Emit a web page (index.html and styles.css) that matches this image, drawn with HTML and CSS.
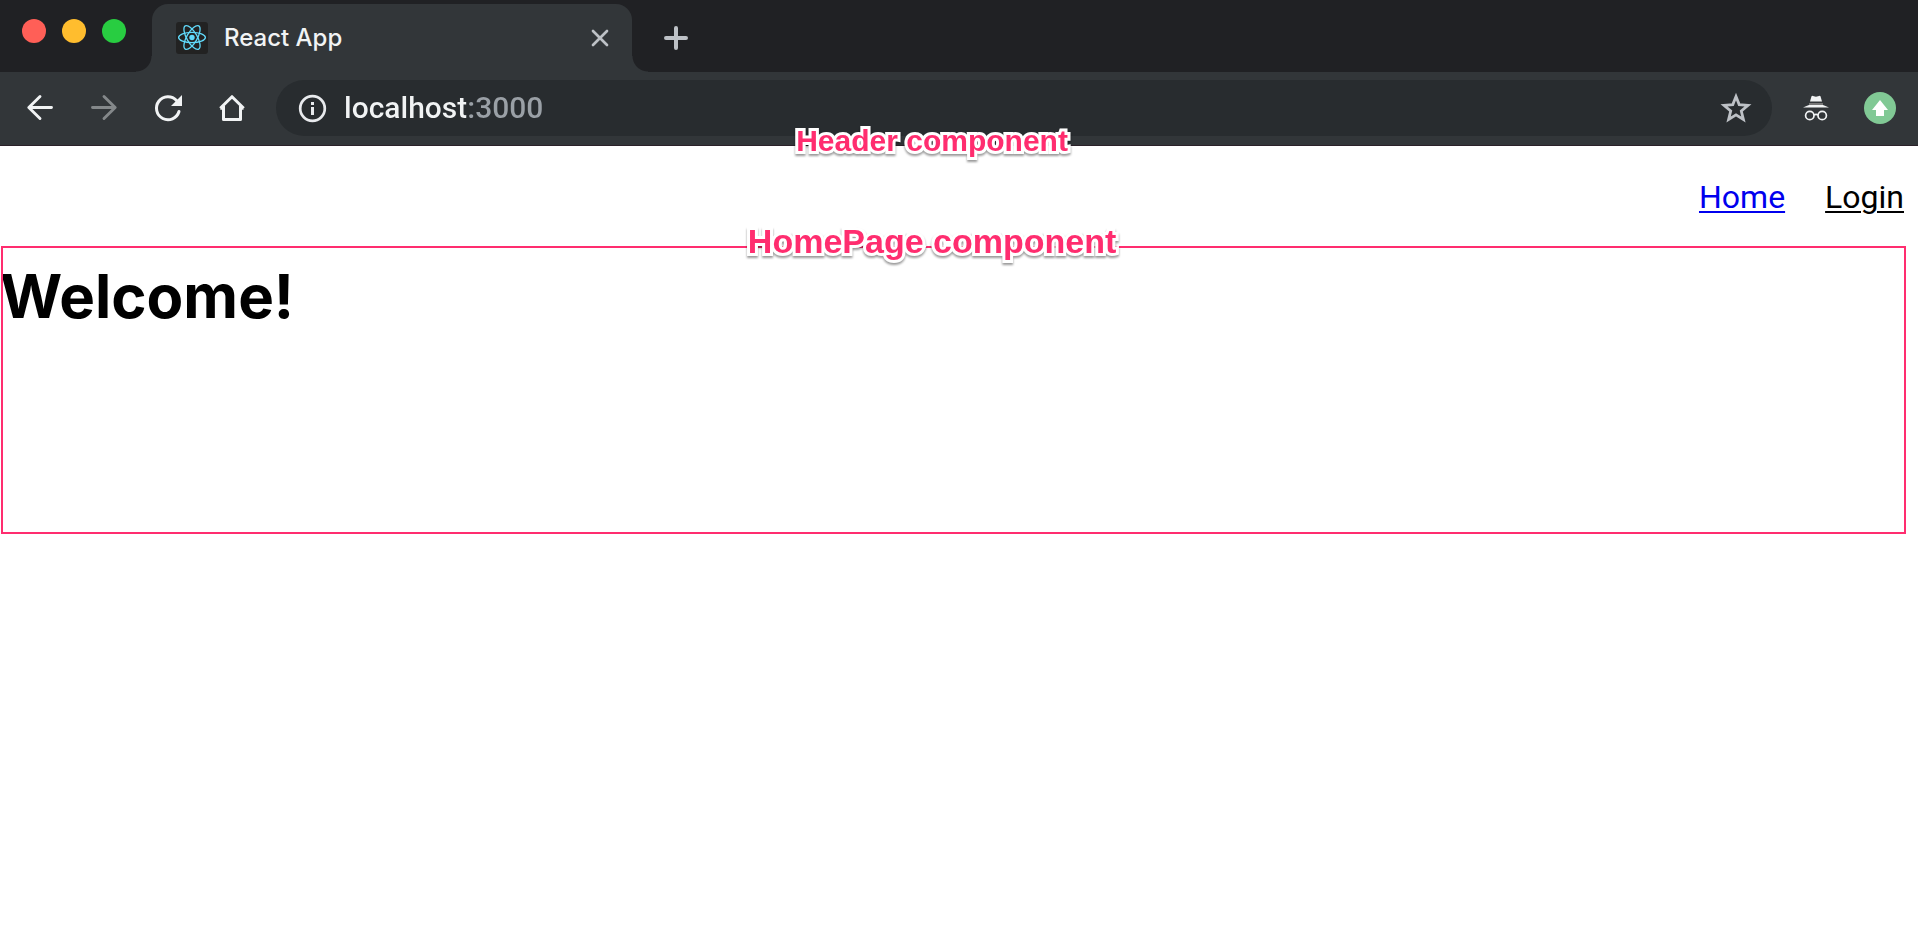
FILE: index.html
```html
<!DOCTYPE html>
<html lang="en">
<head>
<meta charset="utf-8">
<title>React App</title>
<link rel="stylesheet" href="styles.css">
</head>
<body>
<div class="browser">
  <div class="tab-strip">
    <div class="lights">
      <button class="light light-close" aria-label="Close window"></button>
      <button class="light light-min" aria-label="Minimize window"></button>
      <button class="light light-max" aria-label="Zoom window"></button>
    </div>
    <div class="tab">
      <svg class="favicon" viewBox="0 0 32 32" aria-hidden="true">
        <rect width="32" height="32" rx="3" fill="#222"/>
        <g fill="none" stroke="#61dafb" stroke-width="1.3">
          <ellipse cx="16" cy="15.5" rx="13.4" ry="5.2"/>
          <ellipse cx="16" cy="15.5" rx="13.4" ry="5.2" transform="rotate(60 16 15.5)"/>
          <ellipse cx="16" cy="15.5" rx="13.4" ry="5.2" transform="rotate(120 16 15.5)"/>
        </g>
        <circle cx="16" cy="15.5" r="2.7" fill="#61dafb"/>
      </svg>
      <span class="tab-title">React App</span>
      <button class="icon-button tab-close" aria-label="Close tab">
        <svg viewBox="0 0 24 24" width="24" height="24"><path d="M5 5l14 14M19 5L5 19" fill="none" stroke="#bdc1c6" stroke-width="2.7" stroke-linecap="round"/></svg>
      </button>
    </div>
    <button class="icon-button new-tab" aria-label="New tab">
      <svg viewBox="0 0 32 32" width="32" height="32"><path d="M16 6v20M6 16h20" fill="none" stroke="#bdc1c6" stroke-width="4" stroke-linecap="round"/></svg>
    </button>
  </div>
  <div class="toolbar">
    <div class="nav-buttons">
      <button class="icon-button" aria-label="Back">
        <svg viewBox="0 0 32 32" width="32" height="32"><path d="M27.5 15.5H5M16 4.500L4.800 15.500L16 26.500" fill="none" stroke="#f1f3f4" stroke-width="2.9" stroke-linecap="round" stroke-linejoin="round"/></svg>
      </button>
      <button class="icon-button" aria-label="Forward">
        <svg viewBox="0 0 32 32" width="32" height="32"><path d="M4.500 15.500H27M16 4.500L27.200 15.500L16 26.500" fill="none" stroke="#84888a" stroke-width="2.9" stroke-linecap="round" stroke-linejoin="round"/></svg>
      </button>
      <button class="icon-button" aria-label="Reload">
        <svg viewBox="0 0 32 32" width="32" height="32"><path d="M27 19.500A11.500 11.500 0 1 1 24.500 8.500" fill="none" stroke="#f1f3f4" stroke-width="3" stroke-linecap="round"/><path d="M30 3v11H19z" fill="#f1f3f4"/></svg>
      </button>
      <button class="icon-button" aria-label="Home">
        <svg viewBox="0 0 32 32" width="32" height="32"><path d="M7.500 14V27.500h17V14M4.300 16.300L16 4.700L27.700 16.300M4.300 16.300h3M24.500 16.300h3" fill="none" stroke="#f1f3f4" stroke-width="3" stroke-linejoin="round"/></svg>
      </button>
    </div>
    <div class="address-bar">
      <svg class="info" viewBox="0 0 32 32" width="32" height="32" aria-hidden="true"><circle cx="16.5" cy="16.500" r="12.300" fill="none" stroke="#e8eaed" stroke-width="2.700"/><path d="M16.500 10v3M16.500 15v8" stroke="#e8eaed" stroke-width="3"/></svg>
      <input class="address" type="text" value="localhost:3000" aria-label="Address" spellcheck="false">
      <button class="icon-button" aria-label="Bookmark">
        <svg viewBox="0 0 32 32" width="32" height="32"><path d="M16 4.500l3.200 8.100 8.800.7-6.700 5.700 2.100 8.500L16 22.900l-7.400 4.600 2.100-8.500L4 13.300l8.800-.7z" fill="none" stroke="#bdc1c6" stroke-width="2.8"/></svg>
      </button>
    </div>
    <div class="extensions">
      <button class="icon-button" aria-label="Incognito">
        <svg viewBox="0 0 32 32" width="32" height="32"><path d="M10 9.500L11.500 4.200Q12 3.500 13 3.900L16 4.700L19 3.900Q20 3.500 20.500 4.200L22 9.500z" fill="#f1f3f4"/><path d="M9 11h14v2H9z" fill="#777"/><path d="M3 15.500Q7 13.600 9 13h14Q25 13.600 29 15.500z" fill="#f1f3f4"/><g fill="none" stroke="#f1f3f4" stroke-width="1.7"><circle cx="9.800" cy="23.500" r="4.200"/><circle cx="22.200" cy="23.500" r="4.200"/><path d="M14 23Q16 21.700 18 23"/></g></svg>
      </button>
      <button class="icon-button" aria-label="Update">
        <svg viewBox="0 0 32 32" width="32" height="32"><circle cx="16" cy="16" r="16" fill="#81c995"/><path d="M16 8l8 10h-4v6h-8v-6H8z" fill="#fff"/></svg>
      </button>
    </div>
  </div>
</div>
<div class="page">
  <header class="header">
    <span class="label label-header">Header component</span>
    <nav class="links">
      <a class="link" href="#home">Home</a>
      <a class="link link-login" href="#login">Login</a>
    </nav>
  </header>
  <main class="home">
    <span class="label label-home">HomePage component</span>
    <h1 class="title">Welcome!</h1>
  </main>
</div>
</body>
</html>
```
FILE: styles.css
```css
* { box-sizing: border-box; }

body {
  margin: 0;
  background: #fff;
  color: #000;
  font-family: Roboto, "Liberation Sans", sans-serif;
}

button {
  border: 0;
  padding: 0;
  background: none;
}

.browser {
  background: #323639;
  border-bottom: 1px solid #2b2129;
}

.tab-strip {
  display: flex;
  align-items: flex-end;
  height: 72px;
  background: #202124;
}

.lights {
  display: flex;
  align-self: flex-start;
  gap: 16px;
  padding: 19px 26px 0 22px;
}

.light {
  width: 24px;
  height: 24px;
  border-radius: 50%;
}

.light-close { background: #ff5f57; }
.light-min { background: #ffbd2e; }
.light-max { background: #28cd41; }

.tab {
  position: relative;
  display: flex;
  align-items: center;
  width: 480px;
  height: 68px;
  padding: 0 20px 0 24px;
  border-radius: 16px 16px 0 0;
  background: #323639;
}

.tab::before,
.tab::after {
  content: "";
  position: absolute;
  bottom: 0;
  width: 16px;
  height: 16px;
}

.tab::before {
  right: 100%;
  background: radial-gradient(circle at 0 0, transparent 15px, #323639 16px);
}

.tab::after {
  left: 100%;
  background: radial-gradient(circle at 100% 0, transparent 15px, #323639 16px);
}

.favicon {
  width: 32px;
  height: 32px;
}

.tab-title {
  flex: 1;
  margin-left: 16px;
  color: #f1f3f4;
  font-family: Inter, "Liberation Sans", sans-serif;
  font-size: 24px;
  line-height: 32px;
  font-weight: 500;
}

.icon-button {
  display: flex;
  flex: none;
}

.new-tab {
  align-self: center;
  margin: 4px 0 0 28px;
}

.toolbar {
  display: flex;
  align-items: center;
  padding: 8px 22px 9px 24px;
}

.nav-buttons,
.extensions {
  display: flex;
  gap: 32px;
}

.address-bar {
  display: flex;
  flex: 1;
  align-items: center;
  height: 56px;
  margin: 0 28px;
  padding: 0 20px;
  border-radius: 28px;
  background: #282c2f;
}

.address {
  flex: 1;
  min-width: 0;
  margin-left: 16px;
  padding: 0;
  border: 0;
  outline: 0;
  background: linear-gradient(90deg, #f1f3f4 122px, #9aa0a6 122px);
  background-clip: text;
  -webkit-background-clip: text;
  color: transparent;
  font: 500 30px/40px Roboto, "Liberation Sans", sans-serif;
}

.page {
  padding-right: 12px;
}

.header {
  position: relative;
  padding: 31px 2px 29px 0;
}

.links {
  display: flex;
  justify-content: flex-end;
  gap: 40px;
}

.link {
  color: #00e;
  font-size: 32px;
  line-height: 40px;
  text-decoration-thickness: 2px;
  text-underline-offset: 3px;
}

.link-login { color: #000; }

.home {
  position: relative;
  height: 288px;
  padding-top: 10px;
}

.home::after {
  content: "";
  position: absolute;
  inset: 0 0 0 1px;
  border: 2px solid #ff2d6f;
  pointer-events: none;
}

.title {
  margin: 0;
  font-family: Inter, "Liberation Sans", sans-serif;
  font-size: 60px;
  line-height: 80px;
  font-weight: 700;
}

.label {
  position: absolute;
  left: 48.9%;
  z-index: 1;
  transform: translateX(-50%);
  color: #ff2d6f;
  font-family: "Liberation Sans", Arial, sans-serif;
  font-weight: 700;
  line-height: 40px;
  white-space: nowrap;
  -webkit-text-stroke: 6px #fff;
  paint-order: stroke fill;
  filter: drop-shadow(0 2px 1px rgba(0, 0, 0, 0.4));
}

.label-header {
  top: -25px;
  font-size: 30px;
}

.label-home {
  top: -25px;
  font-size: 34px;
}
```
